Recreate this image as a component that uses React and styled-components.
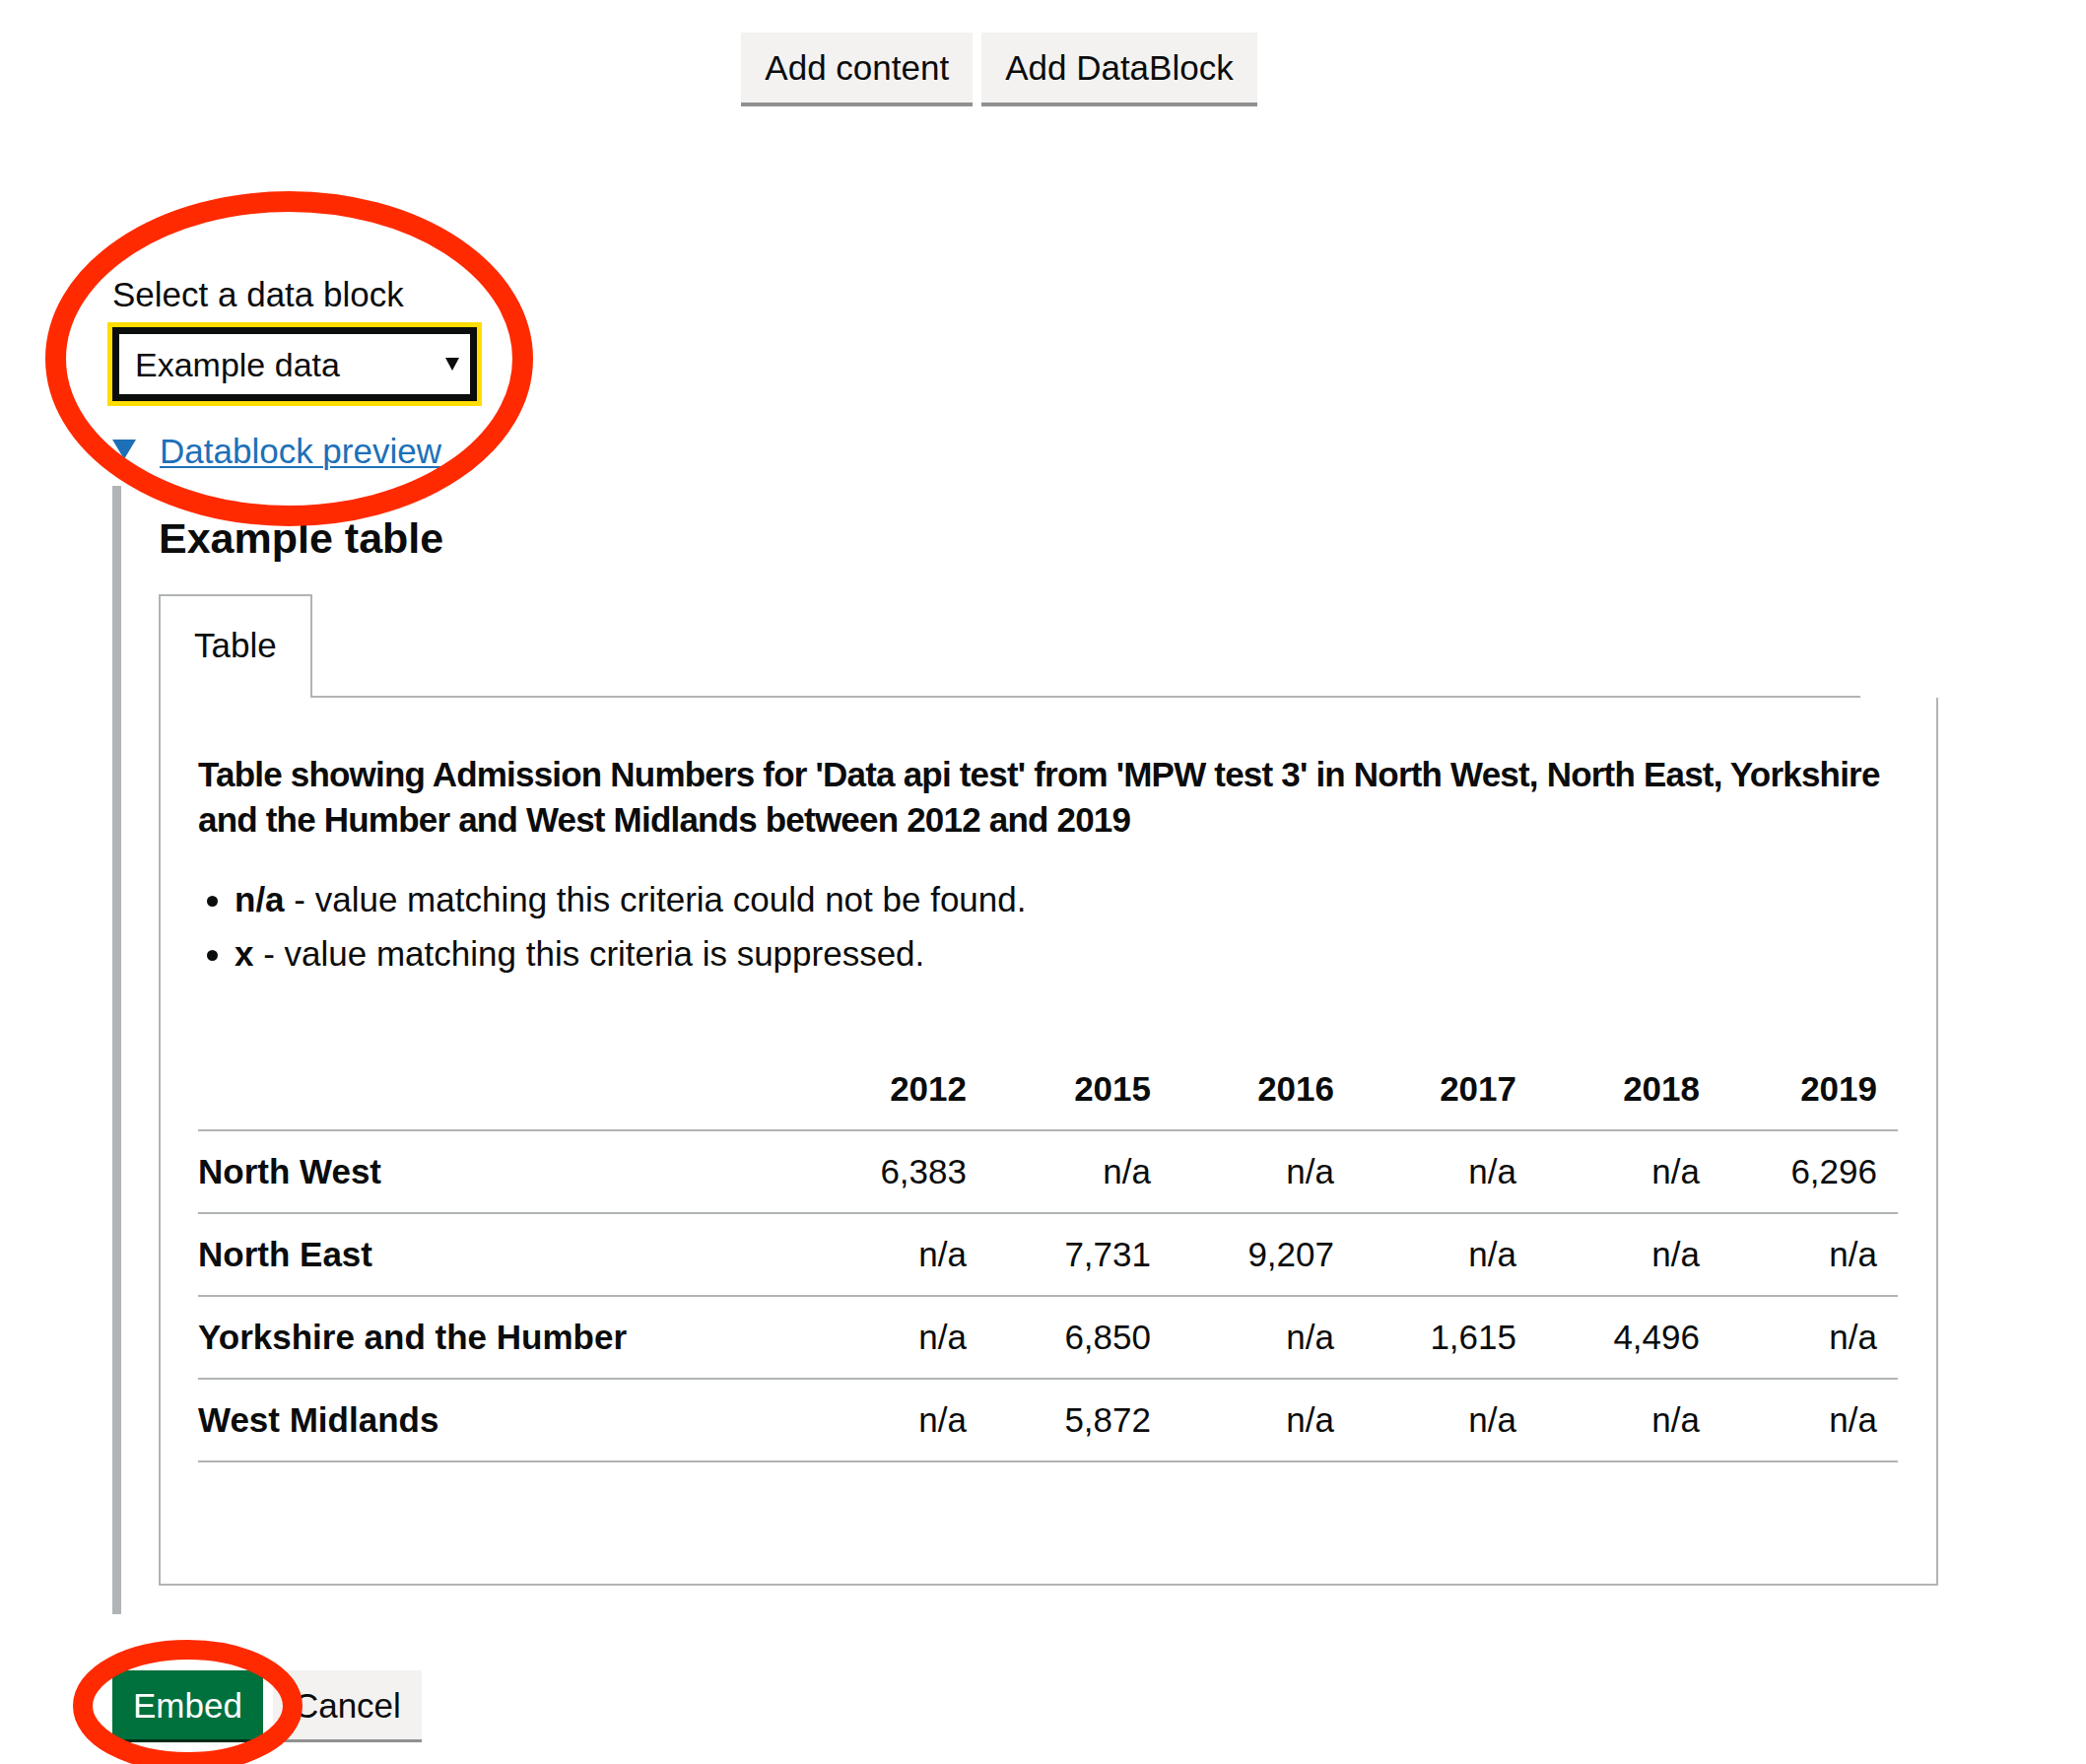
import styled, { createGlobalStyle } from 'styled-components';

const GlobalStyle = createGlobalStyle`
  * {
    box-sizing: border-box;
  }

  body {
    margin: 0;
    background: #ffffff;
    color: #0b0c0c;
    font-family: "Liberation Sans", Arial, sans-serif;
  }
`;

// Sample table data
const years = ['2012', '2015', '2016', '2017', '2018', '2019'];
const colWidths = [615, 186, 187, 186, 185, 186, 180];

const rows = [
  { region: 'North West', values: ['6,383', 'n/a', 'n/a', 'n/a', 'n/a', '6,296'] },
  { region: 'North East', values: ['n/a', '7,731', '9,207', 'n/a', 'n/a', 'n/a'] },
  { region: 'Yorkshire and the Humber', values: ['n/a', '6,850', 'n/a', '1,615', '4,496', 'n/a'] },
  { region: 'West Midlands', values: ['n/a', '5,872', 'n/a', 'n/a', 'n/a', 'n/a'] },
];

const App = () => {
  return (
    <Page>
      <GlobalStyle />

      <Toolbar>
        <Button>Add content</Button>
        <Button>Add DataBlock</Button>
      </Toolbar>

      <Form>
        <Label htmlFor="datablock-select">Select a data block</Label>
        <SelectBox id="datablock-select" role="combobox" tabIndex={0}>
          <span>Example data</span>
          <SelectArrow />
        </SelectBox>

        <Summary>
          <SummaryArrow />
          <SummaryLink href="#preview">Datablock preview</SummaryLink>
        </Summary>

        <DetailsBody>
          <Heading>Example table</Heading>

          <TabsWrap>
            <TabList>
              <Tab>Table</Tab>
            </TabList>

            <Panel>
              <Caption>
                Table showing Admission Numbers for 'Data api test' from 'MPW test 3' in North West, North East, Yorkshire
                and the Humber and West Midlands between 2012 and 2019
              </Caption>

              <Notes>
                <li>
                  <strong>n/a</strong> - value matching this criteria could not be found.
                </li>
                <li>
                  <strong>x</strong> - value matching this criteria is suppressed.
                </li>
              </Notes>

              <DataTable>
                <colgroup>
                  {colWidths.map((w, i) => (
                    <col key={i} style={{ width: w }} />
                  ))}
                </colgroup>
                <thead>
                  <tr>
                    <HeadCell />
                    {years.map(year => (
                      <HeadCell key={year} $numeric>{year}</HeadCell>
                    ))}
                  </tr>
                </thead>
                <tbody>
                  {rows.map(row => (
                    <tr key={row.region}>
                      <HeadCell scope="row">{row.region}</HeadCell>
                      {row.values.map((value, i) => (
                        <Cell key={i}>{value}</Cell>
                      ))}
                    </tr>
                  ))}
                </tbody>
              </DataTable>
            </Panel>
          </TabsWrap>
        </DetailsBody>

        <Actions>
          <Button $compact $primary>Embed</Button>
          <Button $compact>Cancel</Button>
        </Actions>
      </Form>

      {/* red annotation rings drawn over the screenshot */}
      <Annotations viewBox="0 0 2117 1790">
        <ellipse cx="293.5" cy="364" rx="237" ry="159.5" fill="none" stroke="#ff2a00" strokeWidth="21" />
        <ellipse cx="190.5" cy="1731" rx="106.5" ry="57" fill="none" stroke="#ff2a00" strokeWidth="20" />
      </Annotations>
    </Page>
  );
};

// Styled Components
const Page = styled.div`
  position: relative;
  width: 2117px;
  height: 1790px;
  overflow: hidden;
  padding-top: 33px;
`;

const Toolbar = styled.div`
  display: flex;
  justify-content: center;
  gap: 9px;
  width: 2028px;
`;

const Button = styled.button`
  display: inline-flex;
  align-items: center;
  height: ${props => (props.$compact ? 70 : 71)}px;
  padding: 0 ${props => (props.$compact ? 21 : 24)}px;
  border: none;
  border-radius: 0;
  font-family: inherit;
  font-size: 35px;
  line-height: 1;
  color: ${props => (props.$primary ? '#ffffff' : '#0b0c0c')};
  background-color: ${props => (props.$primary ? '#00703c' : '#f3f2f1')};
  box-shadow: 0 ${props => (props.$compact ? 3 : 4)}px 0 ${props => (props.$primary ? '#002d18' : '#929191')};
  cursor: pointer;
`;

const Form = styled.div`
  padding-left: 114px;
  margin-top: 172px;
`;

const Label = styled.label`
  display: block;
  font-size: 35px;
  line-height: 46px;
  margin-bottom: 10px;
`;

const SelectBox = styled.div`
  display: flex;
  align-items: center;
  justify-content: space-between;
  width: 370px;
  height: 75px;
  padding: 0 11px 0 16px;
  border: 7px solid #0b0c0c;
  outline: 5px solid #ffdd00;
  font-size: 34px;
  line-height: 1;
`;

const SelectArrow = styled.span`
  width: 0;
  height: 0;
  border-left: 7px solid transparent;
  border-right: 7px solid transparent;
  border-top: 13px solid #0b0c0c;
`;

const Summary = styled.div`
  display: flex;
  align-items: flex-start;
  gap: 24px;
  margin-top: 28px;
  font-size: 35px;
  line-height: 46px;
`;

const SummaryArrow = styled.span`
  margin-top: 11px;
  width: 0;
  height: 0;
  border-left: 12px solid transparent;
  border-right: 12px solid transparent;
  border-top: 20px solid #1d70b8;
`;

const SummaryLink = styled.a`
  color: #1d70b8;
  text-decoration: underline;
  text-decoration-thickness: 2px;
  text-underline-offset: 3px;
`;

const DetailsBody = styled.div`
  margin-top: 12px;
  border-left: 9px solid #b1b4b6;
  padding: 27px 0 29px 38px;
`;

const Heading = styled.h2`
  margin: 0 0 31px;
  font-size: 43px;
  line-height: 52px;
  font-weight: 700;
`;

const TabsWrap = styled.div`
  width: 1806px;
`;

const TabList = styled.div`
  display: flex;
  margin-right: 79px;
  border-bottom: 2px solid #b1b4b6;
`;

const Tab = styled.div`
  position: relative;
  margin-bottom: -2px;
  padding: 27px 34px 30px;
  border: 2px solid #b1b4b6;
  border-bottom: none;
  background: #ffffff;
  font-size: 35px;
  line-height: 46px;
`;

const Panel = styled.div`
  padding: 55px 38px 123px;
  border: 2px solid #b1b4b6;
  border-top: none;
`;

const Caption = styled.p`
  margin: 0 0 35px;
  font-size: 35px;
  line-height: 46px;
  font-weight: 700;
  letter-spacing: -0.8px;
`;

const Notes = styled.ul`
  margin: 0 0 73px;
  padding-left: 37px;
  font-size: 35px;
  line-height: 46px;

  li + li {
    margin-top: 9px;
  }

  strong {
    font-weight: 700;
  }
`;

const DataTable = styled.table`
  width: 1725px;
  table-layout: fixed;
  border-collapse: collapse;
  border-spacing: 0;
  font-size: 35px;
  line-height: 46px;
`;

const HeadCell = styled.th`
  padding: 18px ${props => (props.$numeric ? 21 : 0)}px 18px 0;
  border-bottom: 2px solid #b1b4b6;
  font-weight: 700;
  text-align: ${props => (props.$numeric ? 'right' : 'left')};
  white-space: nowrap;
`;

const Cell = styled.td`
  padding: 18px 21px 18px 0;
  border-bottom: 2px solid #b1b4b6;
  text-align: right;
`;

const Actions = styled.div`
  display: flex;
  gap: 10px;
  margin-top: 57px;
`;

const Annotations = styled.svg`
  position: absolute;
  top: 0;
  left: 0;
  width: 2117px;
  height: 1790px;
  pointer-events: none;
`;

export default App;
